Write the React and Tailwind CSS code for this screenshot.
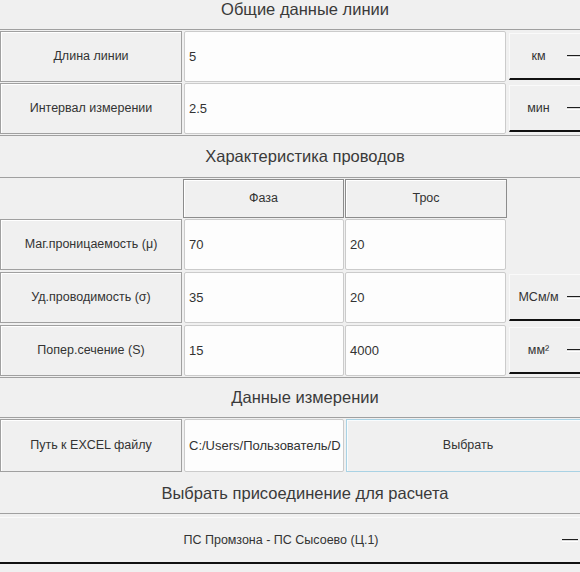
import React from 'react';

const FONT = { fontFamily: '"Liberation Sans", Arial, sans-serif' };

const Title = ({ children, className }) => (
    <div className={`flex items-center justify-center text-[16.5px] text-[#3a3a3a] ${className}`}>
        {children}
    </div>
);

const Label = ({ children, className = '' }) => (
    <div className={`w-[182px] shrink-0 flex items-center justify-center border border-[#a0a0a0] shadow-[inset_1px_1px_0_#ffffff] text-[12.5px] text-[#333] ${className}`}>
        {children}
    </div>
);

const Entry = ({ value, className = '' }) => (
    <div className={`shrink-0 flex items-center pl-[4px] bg-[#fdfdfd] border border-[#cbcbcb] rounded-[2px] text-[13px] text-[#333] overflow-hidden whitespace-nowrap ${className}`}>
        {value}
    </div>
);

const Indicator = () => (
    <div className="w-[16px] h-[3px] border-t border-[#1e1e1e] border-b border-b-[#ffffff] bg-[#d9d9d9] shrink-0" />
);

const Unit = ({ children }) => (
    <div className="ml-[3px] w-[90px] shrink-0 flex items-center my-[2px] border-t border-l border-[#fafafa] border-b-2 border-b-[#111]">
        <div className="w-[57px] text-center text-[12.5px] text-[#333]">{children}</div>
        <Indicator />
    </div>
);

const Header = ({ children, className = '' }) => (
    <div className={`shrink-0 flex items-center justify-center border border-[#8c8c8c] shadow-[inset_1px_1px_0_#ffffff] text-[12.5px] text-[#333] ${className}`}>
        {children}
    </div>
);

export default function App() {
    return (
        <div className="w-[580px] h-[572px] overflow-hidden bg-[#f0f0f0]" style={FONT}>
            <div className="w-[610px]">
                <Title className="h-[30px] pb-[10px] border-b border-[#a0a0a0]">Общие данные линии</Title>

                <div className="flex flex-col gap-[1px] pt-[1px] pb-[1px]">
                    <div className="flex h-[51px]">
                        <Label>Длина линии</Label>
                        <Entry value="5" className="ml-[2px] w-[322px]" />
                        <Unit>км</Unit>
                    </div>
                    <div className="flex h-[51px]">
                        <Label>Интервал измерении</Label>
                        <Entry value="2.5" className="ml-[2px] w-[322px]" />
                        <Unit>мин</Unit>
                    </div>
                </div>

                <Title className="h-[43px] border-t border-b border-[#a0a0a0]">Характеристика проводов</Title>

                <div className="flex flex-col pt-[1px]">
                    <div className="flex h-[39px] mb-[1px]">
                        <div className="w-[182px] shrink-0" />
                        <Header className="ml-[1px] w-[161px]">Фаза</Header>
                        <Header className="ml-[1px] w-[162px]">Трос</Header>
                    </div>
                    <div className="flex flex-col gap-[2px]">
                        <div className="flex h-[51px]">
                            <Label>Маг.проницаемость (μ)</Label>
                            <Entry value="70" className="ml-[2px] w-[160px]" />
                            <Entry value="20" className="ml-[1px] w-[161px]" />
                        </div>
                        <div className="flex h-[51px]">
                            <Label>Уд.проводимость (σ)</Label>
                            <Entry value="35" className="ml-[2px] w-[160px]" />
                            <Entry value="20" className="ml-[1px] w-[161px]" />
                            <Unit>МСм/м</Unit>
                        </div>
                        <div className="flex h-[51px]">
                            <Label>Попер.сечение (S)</Label>
                            <Entry value="15" className="ml-[2px] w-[160px]" />
                            <Entry value="4000" className="ml-[1px] w-[161px]" />
                            <Unit>мм²</Unit>
                        </div>
                    </div>
                </div>

                <Title className="mt-[1px] h-[41px] border-t border-b border-[#a0a0a0]">Данные измерении</Title>

                <div className="flex h-[53px] mt-[1px]">
                    <Label>Путь к EXCEL файлу</Label>
                    <Entry value="C:/Users/Пользователь/D" className="ml-[2px] w-[160px]" />
                    <div className="ml-[2px] w-[244px] shrink-0 flex items-center justify-center border border-[#a9d2e4] shadow-[inset_1px_1px_0_#f8fcfe] text-[12.5px] text-[#333]">
                        Выбрать
                    </div>
                </div>

                <Title className="h-[42px] pt-[1px] border-b border-[#a0a0a0]">Выбрать присоединение для расчета</Title>

                <div className="mt-[3px] h-[47px] flex items-center border-t border-[#fafafa] border-b-2 border-b-[#111]">
                    <div className="w-[562px] text-center text-[12.5px] text-[#333]">ПС Промзона - ПС Сысоево (Ц.1)</div>
                    <Indicator />
                </div>
            </div>
        </div>
    );
}
